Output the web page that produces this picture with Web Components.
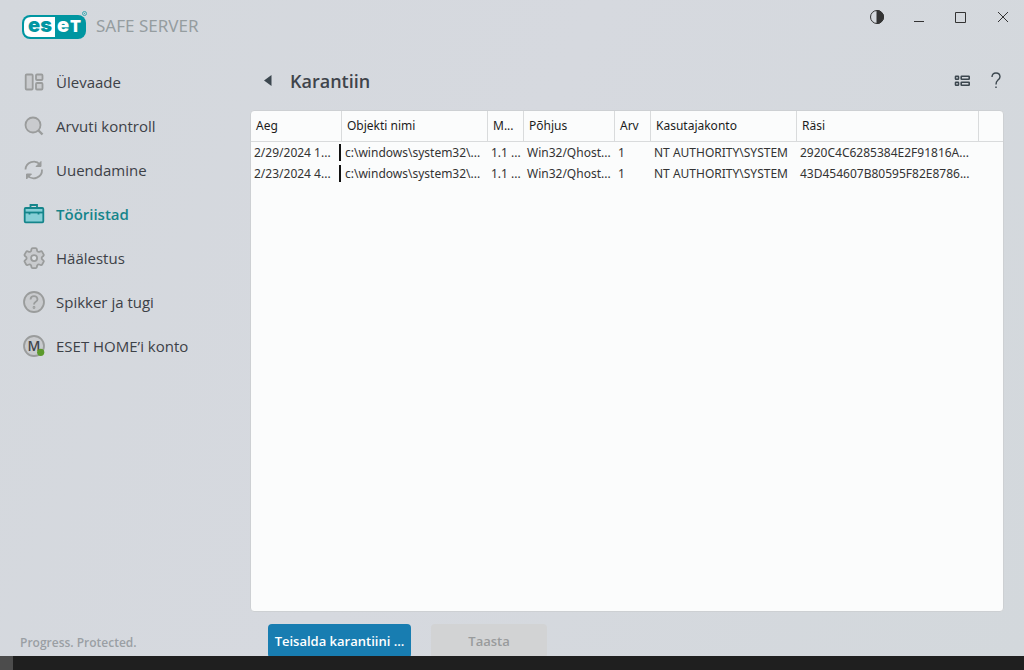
<!DOCTYPE html>
<html lang="et">
<head>
<meta charset="utf-8">
<title>ESET Safe Server</title>
<style>
  html, body { margin: 0; height: 100%; }
  body { font-family: "Open Sans", "Noto Sans", sans-serif; font-size: 12px; color: #3a3e44; background: #d5d9de; }
</style>
</head>
<body>
<app-window>
  <brand-logo slot="brand"></brand-logo>
  <window-controls slot="controls"></window-controls>
  <side-nav slot="nav">
    <nav-item icon="overview">Ülevaade</nav-item>
    <nav-item icon="search">Arvuti kontroll</nav-item>
    <nav-item icon="update">Uuendamine</nav-item>
    <nav-item icon="tools" active>Tööriistad</nav-item>
    <nav-item icon="setup">Häälestus</nav-item>
    <nav-item icon="help">Spikker ja tugi</nav-item>
    <nav-item icon="account">ESET HOME’i konto</nav-item>
  </side-nav>
  <page-header>Karantiin</page-header>
  <quarantine-table></quarantine-table>
  <action-bar>
    <action-button primary>Teisalda karantiini ...</action-button>
    <action-button disabled>Taasta</action-button>
  </action-bar>
</app-window>

<script>
const define = (name, html, setup) => {
  const template = document.createElement('template');
  template.innerHTML = html;
  customElements.define(name, class extends HTMLElement {
    constructor() {
      super();
      this.attachShadow({ mode: 'open' }).append(template.content.cloneNode(true));
    }
    connectedCallback() { if (setup) setup(this, this.shadowRoot); }
  });
};

const buttonReset = 'button{appearance:none;border:0;padding:0;margin:0;background:none;font:inherit;color:inherit;display:grid;place-items:center;}';

define('app-window', `
  <style>
    :host { display: grid; grid-template: 60px minmax(0, 1fr) 14px / 250px minmax(0, 1fr); height: 100vh; overflow: hidden;
      background: linear-gradient(115deg, #d4d8dd, #d6d9df 45%, #d3d8dc); }
    header { grid-column: 1 / 3; display: flex; justify-content: space-between; align-items: flex-start; }
    aside { display: flex; flex-direction: column; justify-content: space-between; }
    aside p { margin: 0; padding: 0 0 4px 20px; font-size: 12px; line-height: 18px; font-weight: 600; color: #9a9fa4; }
    main { display: flex; flex-direction: column; min-height: 0; }
    footer { grid-column: 1 / 3; background: #1f1f1f; border-left: 13px solid #4c4c4c; z-index: 1; }
  </style>
  <header><slot name="brand"></slot><slot name="controls"></slot></header>
  <aside><slot name="nav"></slot><p>Progress. Protected.</p></aside>
  <main><slot></slot></main>
  <footer></footer>`);

define('brand-logo', `
  <style>
    :host { display: flex; align-items: center; gap: 8px; padding: 10px 0 0 21px; font-family: "Noto Sans", sans-serif; font-size: 17px; line-height: 32px; color: #959da0; }
    svg { display: block; }
    text { font-family: Inter, sans-serif; font-weight: 900; }
  </style>
  <svg width="67" height="32" viewBox="0 0 67 32" role="img" aria-label="ESET">
    <rect x="1" y="5" width="64" height="24" rx="8" fill="#0096a1"/>
    <path d="M34 7v20H10q-7 0-7-7v-6q0-7 7-7z" fill="#fff"/>
    <text x="7" y="22" font-size="20" fill="#0096a1">es</text>
    <text x="36" y="22" font-size="20" fill="#fff">e</text>
    <text x="49" y="22" font-size="16" fill="#fff">T</text>
    <circle cx="63.500" cy="3.500" r="2" fill="none" stroke="#3aa9b1"/>
    <circle cx="63.500" cy="3.500" r=".7" fill="#3aa9b1"/>
  </svg>
  <span>SAFE SERVER</span>`);

define('window-controls', `
  <style>
    :host { display: flex; color: #333; }
    ${buttonReset}
    button { width: 42px; height: 34px; }
    svg { fill: none; stroke: currentColor; }
  </style>
  <button aria-label="Kontrast"><svg width="16" height="16"><circle cx="8" cy="8" r="6.500"/><path d="M8 1.500a6.500 6.500 0 0 1 0 13z" fill="currentColor"/></svg></button>
  <button aria-label="Minimeeri"><svg width="16" height="16"><path d="M3 12.500h10"/></svg></button>
  <button aria-label="Maksimeeri"><svg width="16" height="16"><path d="M2.500 3.500h10v10h-10z"/></svg></button>
  <button aria-label="Sule"><svg width="16" height="16"><path d="M3 3l10 10M13 3L3 13"/></svg></button>`);

define('side-nav', `
  <style>:host { display: block; } nav { display: flex; flex-direction: column; }</style>
  <nav><slot></slot></nav>`);

const icons = {
  overview: '<rect x="3.700" y="4.500" width="7" height="15" rx="1"/><rect x="14" y="4.500" width="6.500" height="5.500" rx="1"/><rect x="14" y="13" width="6.500" height="6.500" rx="1"/>',
  search: '<path d="M16.500 16.500l4 4" stroke-width="2.400"/><circle cx="11" cy="11" r="7.500"/>',
  update: '<g fill="none"><path d="M3.500 11.500a8.300 8.300 0 0 1 14.500-5"/><path d="M20 11.500a8.300 8.300 0 0 1-14.500 6"/></g><path d="M19 3.500v5h-5zM4.500 21v-5h5z" fill="#9a9c9c" stroke-width="1"/>',
  tools: '<path d="M8.500 6V3h6.500v3" fill="none"/><rect x="2.700" y="6" width="18.600" height="14.300" rx="1"/><path d="M3 10.500h18" /><path d="M7.500 10.500v2M16.500 10.500v2"/>',
  setup: '<path transform="translate(-1.300 -1.300) scale(1.120)" stroke-width="1.600" d="M9.594 3.940c.09-.542.56-.94 1.110-.94h2.593c.55 0 1.020.398 1.110.94l.213 1.281c.063.374.313.686.645.87.074.04.147.083.22.127.325.196.72.257 1.075.124l1.217-.456a1.125 1.125 0 0 1 1.370.49l1.296 2.247a1.125 1.125 0 0 1-.26 1.431l-1.003.827c-.293.241-.438.613-.43.992a7.723 7.723 0 0 1 0 .255c-.008.378.137.75.43.991l1.004.827c.424.35.534.955.26 1.430l-1.298 2.247a1.125 1.125 0 0 1-1.369.491l-1.217-.456c-.355-.133-.75-.072-1.076.124a6.470 6.470 0 0 1-.22.128c-.331.183-.581.495-.644.869l-.213 1.281c-.09.543-.56.94-1.110.94h-2.594c-.55 0-1.019-.398-1.110-.94l-.213-1.281c-.062-.374-.312-.686-.644-.87a6.520 6.520 0 0 1-.22-.127c-.325-.196-.72-.257-1.076-.124l-1.217.456a1.125 1.125 0 0 1-1.369-.49l-1.297-2.247a1.125 1.125 0 0 1 .26-1.431l1.004-.827c.292-.24.437-.613.43-.991a6.932 6.932 0 0 1 0-.255c.007-.38-.138-.751-.43-.992l-1.004-.827a1.125 1.125 0 0 1-.26-1.430l1.297-2.247a1.125 1.125 0 0 1 1.370-.491l1.216.456c.356.133.751.072 1.076-.124.072-.044.146-.086.22-.128.332-.183.582-.495.644-.869l.214-1.280Z"/><circle cx="12.100" cy="12.100" r="3" fill="#dcdfe2"/>',
  help: '<circle cx="12" cy="12" r="10"/><path d="M8.500 9.500q.3-3.300 3.500-3.300t3.500 3q0 1.700-2 2.800-1.500 1-1.500 2.500" fill="none"/><circle cx="12" cy="17.500" r=".5"/>',
  account: '<circle cx="12" cy="12" r="10"/><text x="12" y="17" text-anchor="middle" font-size="14" font-weight="600" fill="#41454b" stroke="none">M</text><circle cx="18.700" cy="18.300" r="3.600" fill="#5c9a2c" stroke="none"/>'
};

define('nav-item', `
  <style>
    :host { display: block; --line: #9a9c9c; --fill: #c9cbce; }
    :host([active]) { --line: #15858b; --fill: #86cfd6; }
    a { display: flex; align-items: center; gap: 10px; height: 44px; padding-left: 22px; font-size: 15px; line-height: 20px; color: #3d4147; text-decoration: none; }
    :host([active]) a { color: #15858b; font-weight: 600; }
    svg { flex: none; fill: var(--fill); stroke: var(--line); stroke-width: 1.8; }
  </style>
  <a href="#"><svg width="24" height="24" viewBox="0 0 24 24" aria-hidden="true"></svg><span><slot></slot></span></a>`,
  (host, root) => {
    root.querySelector('svg').innerHTML = icons[host.getAttribute('icon')];
    if (host.hasAttribute('active')) root.querySelector('a').setAttribute('aria-current', 'page');
  });

define('page-header', `
  <style>
    :host { display: flex; align-items: center; height: 42px; margin-bottom: 8px; padding-right: 11px; color: #3c474f; }
    ${buttonReset}
    button { width: 34px; height: 34px; }
    .back { width: 36px; }
    h1 { flex: 1; margin: 0 0 0 4px; font-size: 18px; line-height: 24px; font-weight: 600; color: #3f444b; }
    svg { fill: none; stroke: currentColor; }
  </style>
  <button class="back" aria-label="Tagasi"><svg width="8" height="12"><path d="M7.500 0v11L0 5.500z" fill="currentColor" stroke="none"/></svg></button>
  <h1><slot></slot></h1>
  <button aria-label="Vaade"><svg width="16" height="12" stroke-width="1.600"><rect x="1.500" y="1.200" width="3" height="3" rx=".5"/><rect x="7.200" y="1.200" width="8" height="3" rx=".5"/><rect x="1.500" y="7.200" width="3" height="3" rx=".5"/><rect x="7.200" y="7.200" width="8" height="3" rx=".5"/></svg></button>
  <button aria-label="Spikker"><svg width="12" height="18" stroke-width="1.400"><path d="M2 5q.2-4 4-4t4 3.700q0 2-2.200 3.500Q6 9.500 6 12.500"/><path d="M6 14.500v1.500"/></svg></button>`);

const columns = [['Aeg', 91], ['Objekti nimi', 146], ['M...', 36], ['Põhjus', 91], ['Arv', 36], ['Kasutajakonto', 146], ['Räsi', 182], ['', 0]];
const rows = [
  ['2/29/2024 1...', 'c:\\windows\\system32\\...', '1.1 ...', 'Win32/Qhost...', '1', 'NT AUTHORITY\\SYSTEM', '2920C4C6285384E2F91816A...', ''],
  ['2/23/2024 4...', 'c:\\windows\\system32\\...', '1.1 ...', 'Win32/Qhost...', '1', 'NT AUTHORITY\\SYSTEM', '43D454607B80595F82E8786...', '']
];

define('quarantine-table', `
  <style>
    :host { display: block; flex: 1; min-height: 0; margin-right: 20px; background: #fbfcfc; border: 1px solid #cdd0d3; border-radius: 4px; overflow: hidden; font-family: "Noto Sans", sans-serif; }
    table { width: 100%; table-layout: fixed; border-collapse: separate; border-spacing: 0; }
    th, td { box-sizing: border-box; padding: 0; text-align: left; white-space: nowrap; overflow: hidden; font-size: 12px; line-height: 16px; }
    th { height: 31px; padding-left: 5px; font-weight: 400; color: #1c1c1c; border-right: 1px solid #d9dbdc; border-bottom: 1px solid #d9dbdc; }
    th:last-child { border-right: 0; }
    td { height: 21px; padding-left: 3px; color: #333; }
    td:first-child { background: linear-gradient(#111, #111) no-repeat right 1px center / 2px 17px; }
  </style>
  <table><colgroup></colgroup><thead><tr></tr></thead><tbody></tbody></table>`,
  (host, root) => {
    const cell = (tag, text) => Object.assign(document.createElement(tag), { textContent: text });
    for (const [label, width] of columns) {
      const col = document.createElement('col');
      if (width) col.style.width = width + 'px';
      root.querySelector('colgroup').append(col);
      root.querySelector('thead tr').append(cell('th', label));
    }
    for (const row of rows) {
      const tr = document.createElement('tr');
      tr.append(...row.map(text => cell('td', text)));
      root.querySelector('tbody').append(tr);
    }
  });

define('action-bar', `
  <style>:host { display: flex; flex: none; gap: 20px; height: 32px; margin-top: 12px; padding-left: 18px; }</style>
  <slot></slot>`);

define('action-button', `
  <style>
    :host { display: block; }
    ${buttonReset}
    button { box-sizing: border-box; min-width: 116px; height: 34px; padding: 0 6px; border-radius: 4px; font-size: 13px; line-height: 18px; font-weight: 600; color: #999b9c; background: #d2d3d4; }
    :host([primary]) button { min-width: 143px; color: #fff; background: #187db1; }
  </style>
  <button><slot></slot></button>`,
  (host, root) => { root.querySelector('button').disabled = host.hasAttribute('disabled'); });
</script>
</body>
</html>
